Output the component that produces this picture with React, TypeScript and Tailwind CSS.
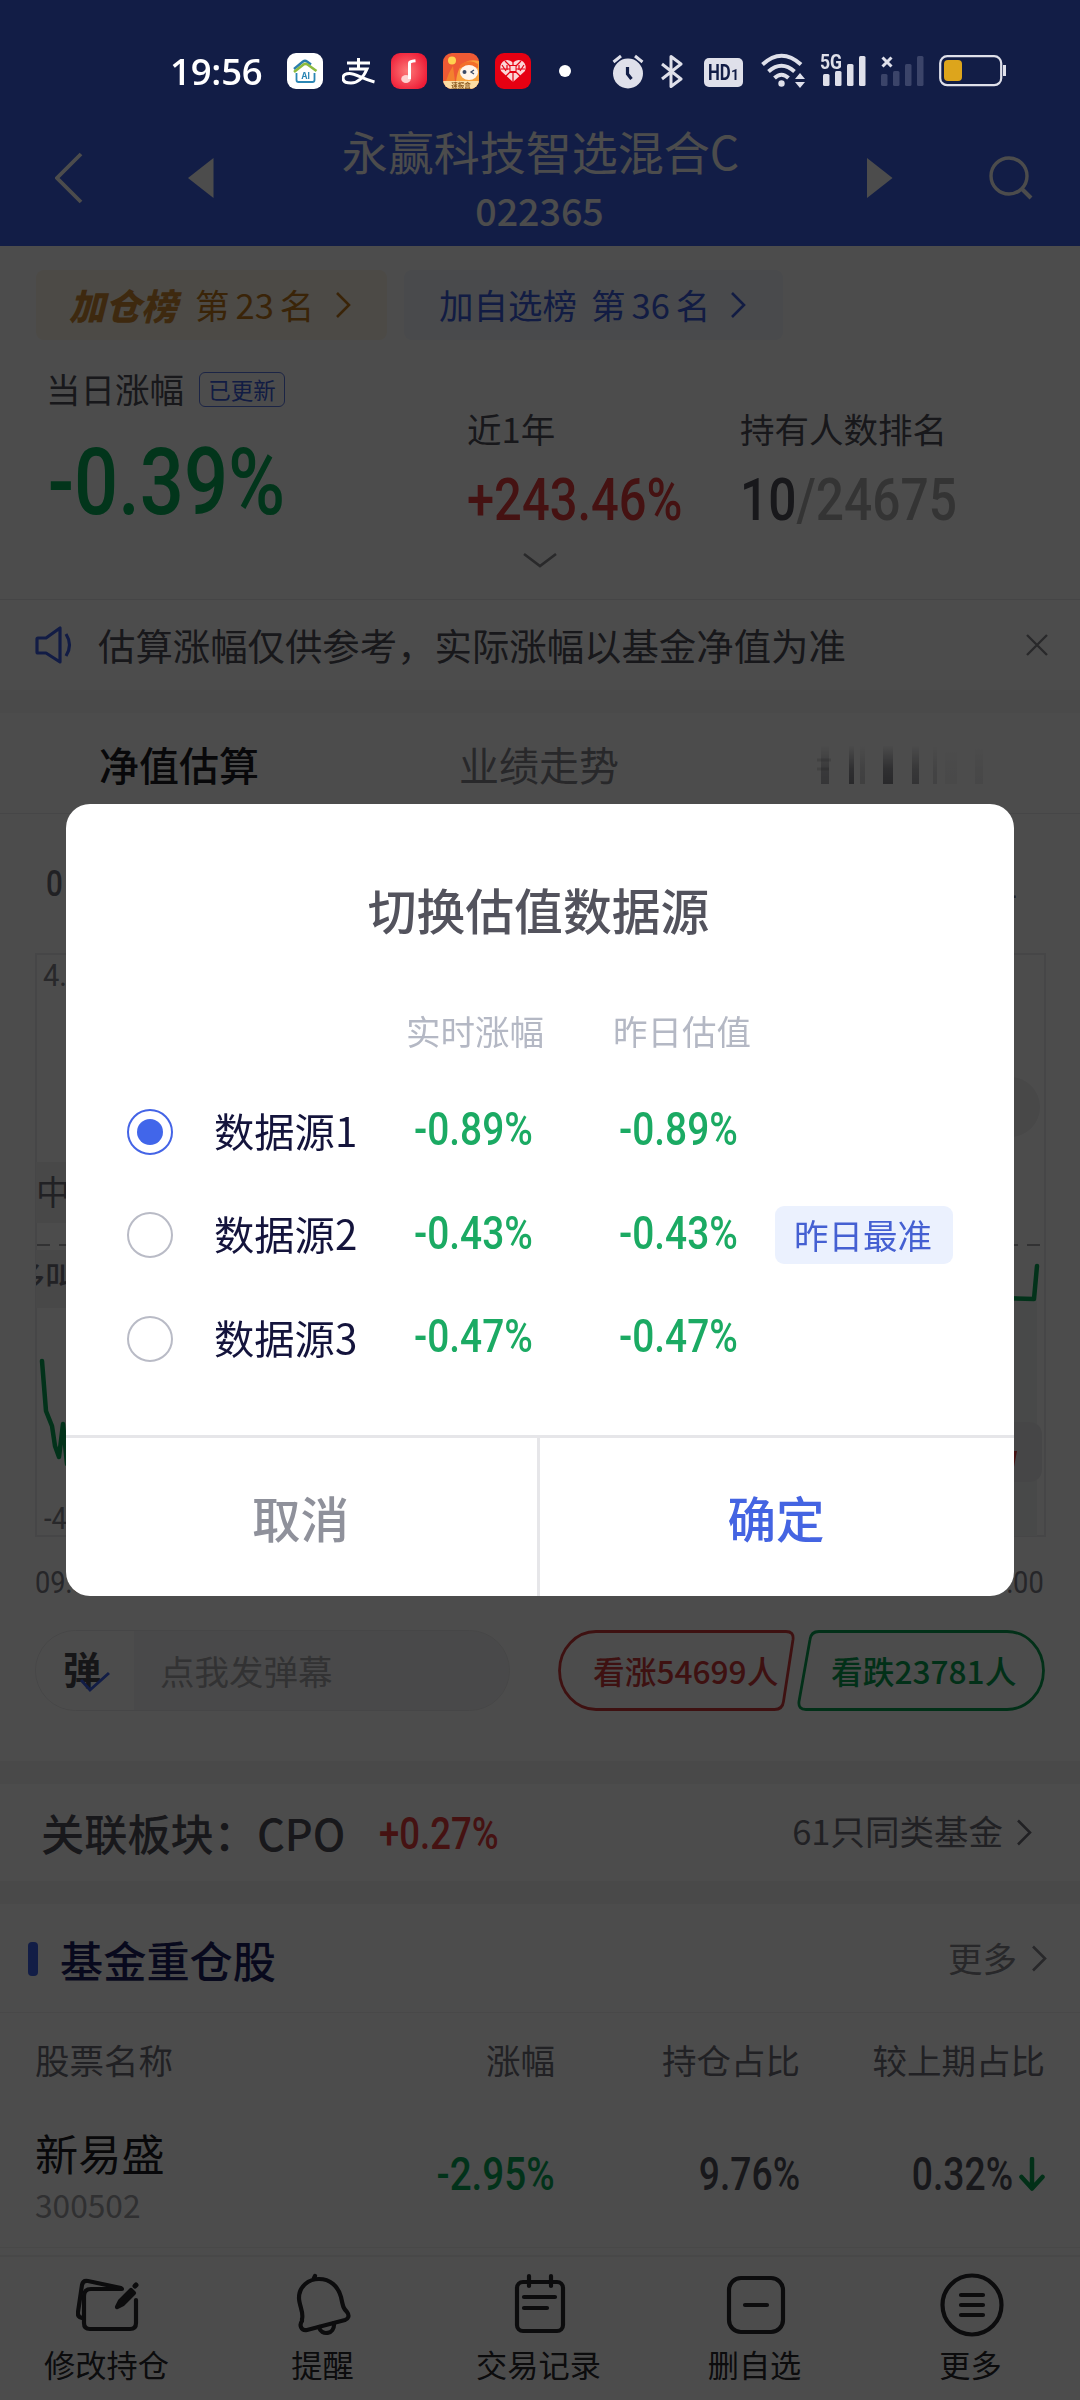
import type { ReactNode } from 'react'
import clsx from 'clsx'

const sources = [
  { name: '数据源1', today: '-0.89%', yesterday: '-0.89%', checked: true },
  { name: '数据源2', today: '-0.43%', yesterday: '-0.43%', best: true },
  { name: '数据源3', today: '-0.47%', yesterday: '-0.47%' },
]

// Narrow figures for every rate and price
function Num({ className, children }: { className?: string; children: ReactNode }) {
  return (
    <span
      className={clsx(
        "inline-block whitespace-nowrap font-['Roboto',sans-serif] font-medium leading-none",
        className
      )}
    >
      {children}
    </span>
  )
}

function Chevron({ className }: { className?: string }) {
  return (
    <svg viewBox="0 0 16 26" className={className} fill="none" stroke="currentColor" strokeWidth="2.6">
      <path d="M2 1l12 12L2 25" />
    </svg>
  )
}

function StatusBar() {
  return (
    <div className="relative z-20 flex h-[110px] items-start pl-[170px] pt-[53px] text-white">
      <span className="w-[117px] font-['Open_Sans',sans-serif] text-[36.5px] font-semibold leading-[36px] tracking-[-0.2px]">
        19:56
      </span>
      <svg width="36" height="36" viewBox="0 0 36 36">
        <rect width="36" height="36" rx="9" fill="#fff" />
        <path d="M7 16L16 8.5q2-1.5 4 0l4 3" fill="none" stroke="#2b7fae" strokeWidth="2.4" />
        <path d="M7 19l9.500-7.500q2-1.400 4 0l9 6.500" fill="none" stroke="#8dbb3e" strokeWidth="2.6" />
        <path d="M9.500 20v7q0 2 2 2h14q2 0 2-2v-7" fill="none" stroke="#2b86b4" strokeWidth="1.8" />
        <text x="18.500" y="25.500" textAnchor="middle" fontSize="8.500" fontWeight="700" fontFamily="Inter" fill="#2b86b4">AI</text>
      </svg>
      <svg width="34" height="36" viewBox="0 0 34 36" className="ml-[19px]" fill="none" stroke="#fff" strokeWidth="3">
        <path d="M5 10h23M16.500 5v11M7 16h18c-3 7-8 14-16 14-5 0-8-2-8-5s3-4.600 6.500-4.600c6 0 12 5.100 25 8.600" />
      </svg>
      <svg width="36" height="36" viewBox="0 0 36 36" className="ml-[15px]">
        <defs>
          <radialGradient id="music" cx="0.45" cy="0.5" r="0.6">
            <stop offset="0" stopColor="#fd7a78" />
            <stop offset="1" stopColor="#ee1b36" />
          </radialGradient>
        </defs>
        <rect width="36" height="36" rx="9" fill="url(#music)" />
        <ellipse cx="15" cy="26" rx="4.800" ry="4" fill="#ffd0cf" />
        <path d="M18.500 26V10q0-1.600 6-2.200" fill="none" stroke="#fff" strokeWidth="3" />
      </svg>
      <svg width="36" height="36" viewBox="0 0 36 36" className="ml-4">
        <defs>
          <clipPath id="boxClip"><rect width="36" height="36" rx="9" /></clipPath>
        </defs>
        <g clipPath="url(#boxClip)">
          <rect width="36" height="36" fill="#ee5a34" />
          <path d="M13 36C12 16 20 4 36 8v28z" fill="#f9a13c" />
          <path d="M0 36l6-16 4-7 3 23z" fill="#f3812e" />
          <circle cx="9" cy="7.500" r="4" fill="#ffd24f" />
          <path d="M17 12q9-7 18-1v4H17z" fill="#f36f2a" />
          <ellipse cx="26" cy="19.500" rx="9" ry="7.500" fill="#fff5ea" />
          <circle cx="21.500" cy="19" r="2" fill="#3b4a66" />
          <path d="M31 17l-3 2 3 2" fill="none" stroke="#3b4a66" strokeWidth="1.300" />
          <rect y="28" width="36" height="8" fill="#fbdca4" />
          <text x="18" y="34.600" textAnchor="middle" fontSize="6.500" fontWeight="700" fontFamily="Noto Sans CJK SC" fill="#8c5a20">速报盒</text>
        </g>
      </svg>
      <svg width="36" height="36" viewBox="0 0 36 36" className="ml-4">
        <rect width="36" height="36" rx="9" fill="#e60012" />
        <path d="M18 29L6 18q-2-6 2-9.500Q13 5 18 9.500 23 5 28 8.500q4 3.500 2 9.500z" fill="#fbd5d6" />
        <path d="M18 9v20M10 8l16 16M26 8L10 24M6 16h24M12 12v5M24 12v5M14 19.500h8M7 12l4 6M29 12l-4 6" stroke="#e60012" strokeWidth="1.200" />
        <path d="M15 12.500h6v6h-6z" fill="#fbd5d6" stroke="#e60012" strokeWidth="1" />
      </svg>
      <span className="ml-7 mt-3 size-3 rounded-full bg-white" />
      <svg width="32" height="35" viewBox="0 0 32 35" className="ml-[41px] mt-px">
        <circle cx="16" cy="19.500" r="15" fill="#dfe0ea" />
        <path d="M1.500 8L9 2M30.500 8L23 2" stroke="#dfe0ea" strokeWidth="3" />
        <path d="M15.500 13v7l4 5" fill="none" stroke="#121d46" strokeWidth="3.200" />
      </svg>
      <svg width="22" height="35" viewBox="0 0 22 35" className="ml-[17px] mt-px" fill="none" stroke="#dfe0ea" strokeWidth="3">
        <path d="M1 10l19 15-10 7.500V2.500L20 10 1 25" strokeLinejoin="round" />
      </svg>
      <span className="ml-[21px] mt-[5px] flex h-[29px] w-[39px] items-baseline justify-center overflow-hidden rounded-[5px] bg-[#dfe0ea] font-['Roboto',sans-serif] text-[21.500px] font-bold leading-[29px] text-[#121d46]">
        <span className="-mr-[7px] origin-left scale-x-[0.78]">HD</span>
        <span className="ml-[1px] text-[14px] leading-none">1</span>
      </span>
      <svg width="45" height="36" viewBox="0 0 45 36" className="ml-[18px]" fill="none" stroke="#dfe0ea" strokeWidth="4">
        <path d="M1.500 11.500Q20.500-6 40 11.500M7.500 18.500Q20.500 7 33.500 18.500M13.500 25Q20.500 18.500 27.500 25" />
        <circle cx="20.500" cy="30.500" r="3.200" fill="#dfe0ea" stroke="none" />
        <path d="M34 26l5-6 5 6zM34 29l5 6 5-6z" fill="#dfe0ea" stroke="none" />
      </svg>
      <svg width="47" height="42" viewBox="0 -8 47 42" className="-mt-2 ml-[14px]">
        <text x="0" y="15.500" fontSize="20" fontWeight="700" fontFamily="Roboto" fill="#dfe0ea" textLength="22" lengthAdjust="spacingAndGlyphs">5G</text>
        <g fill="#dfe0ea">
          <rect x="3" y="21" width="6.500" height="12" rx="1.500" />
          <rect x="15" y="18" width="6.500" height="15" rx="1.500" />
          <rect x="27" y="11" width="6.500" height="22" rx="1.500" />
          <rect x="39" y="3" width="6.500" height="30" rx="1.500" />
        </g>
      </svg>
      <svg width="44" height="34" viewBox="0 0 44 34" className="ml-[14px]">
        <path d="M1.500 4.500l9 9M10.500 4.500l-9 9" stroke="#dfe0ea" strokeWidth="3" />
        <g fill="#3b4469">
          <rect x="0" y="21" width="6.500" height="12" rx="1.500" />
          <rect x="12" y="18" width="6.500" height="15" rx="1.500" />
          <rect x="24" y="11" width="6.500" height="22" rx="1.500" />
          <rect x="36" y="3" width="6.500" height="30" rx="1.500" />
        </g>
      </svg>
      <svg width="68" height="33" viewBox="0 0 68 33" className="ml-[14px] mt-[2px]">
        <rect x="1.200" y="1.200" width="61" height="29" rx="7" fill="none" stroke="#dfe0ea" strokeWidth="2.200" />
        <rect x="5" y="5" width="18" height="21" rx="4" fill="#dda51c" />
        <path d="M65.500 10v11" stroke="#dfe0ea" strokeWidth="3" />
      </svg>
    </div>
  )
}

function Header() {
  return (
    <header className="h-[246px] bg-[#3d62e9]">
      <StatusBar />
      <div className="flex h-[136px] items-center pl-[55px] pr-[47px] text-white">
        <svg width="28" height="52" viewBox="0 0 28 52" fill="none" stroke="currentColor" strokeWidth="3.800">
          <path d="M26 2L2 26l24 24" />
        </svg>
        <svg width="26" height="40" viewBox="0 0 26 40" className="ml-[105px]" fill="currentColor">
          <path d="M25.500 0v40L0 20z" />
        </svg>
        <div className="flex flex-1 flex-col items-center pt-[4px]">
          <h1 className="text-[46px] font-normal leading-[60px]">永赢科技智选混合C</h1>
          <p className="pr-[2px] text-[37.600px] font-medium leading-[60px]">022365</p>
        </div>
        <svg width="26" height="40" viewBox="0 0 26 40" fill="currentColor">
          <path d="M0 0v40l25.500-20z" />
        </svg>
        <svg width="44" height="44" viewBox="0 0 44 44" className="ml-[96px]" fill="none" stroke="currentColor" strokeWidth="3.400">
          <circle cx="20" cy="20" r="18" />
          <path d="M32.500 32.500L42 42" strokeWidth="4" />
        </svg>
      </div>
    </header>
  )
}

function Summary() {
  return (
    <section className="h-[354px] border-b border-[#e8e8ea] pt-6 text-[#50505a]">
      <div className="flex h-[70px] gap-[17px] pl-9 text-[34.5px]">
        <div className="flex w-[351px] items-center rounded-[8px] bg-[#fdf8ea] pl-[33px] text-[#c27a1c]">
          <span className="w-[126px] pb-[2px] text-[36px] font-black italic text-[#d08a34]">加仓榜</span>
          <span>第</span>
          <span className="mx-[6px]">23</span>
          <span>名</span>
          <Chevron className="ml-[21px] h-[26px] w-4" />
        </div>
        <div className="flex w-[379px] items-center rounded-[8px] bg-[#f4f7fe] pl-[35px] text-[#3d5fe0]">
          <span className="mr-[14px]">加自选榜</span>
          <span>第</span>
          <span className="mx-[6px]">36</span>
          <span>名</span>
          <Chevron className="ml-[20px] h-[26px] w-4" />
        </div>
      </div>
      <div className="flex h-[213px] pl-[46px]">
        <div className="w-[421px] pt-[22px]">
          <div className="flex h-[54px] items-center">
            <span className="text-[34.5px]">当日涨幅</span>
            <span className="ml-[15px] flex h-[35px] w-[86px] items-center justify-center rounded-[6px] border border-[#5d78e6] text-[22.5px] leading-none text-[#3d5fe0]">
              已更新
            </span>
          </div>
          <Num className="mt-[20px] origin-left scale-x-[0.835] pl-[2px] text-[93px] text-[#07b35c]">-0.39%</Num>
        </div>
        <div className="w-[273px] pt-[62px]">
          <p className="h-[52px] text-[34.5px] leading-[52px]">近1年</p>
          <Num className="mt-[16px] origin-left scale-x-[0.828] text-[59px] text-[#e63c3c]">+243.46%</Num>
        </div>
        <div className="pt-[62px]">
          <p className="h-[52px] text-[34.5px] leading-[52px]">持有人数排名</p>
          <Num className="mt-[16px] origin-left scale-x-[0.842] text-[59px] text-[#50505a]">
            10<span className="text-[#b0b0b0]">/24675</span>
          </Num>
        </div>
      </div>
      <svg width="34" height="16" viewBox="0 0 34 16" className="mx-auto" fill="none" stroke="#8a8a8e" strokeWidth="2.600">
        <path d="M1 1l16 12L33 1" />
      </svg>
    </section>
  )
}

function Notice() {
  return (
    <div className="flex h-[90px] items-center pl-[35px] pr-8 text-[#50505a]">
      <svg width="40" height="38" viewBox="0 0 40 38" fill="none" stroke="#3d5fe8" strokeWidth="3.200" strokeLinejoin="round">
        <path d="M3 12h8L25 2v34L11 27H3q-1 0-1-1V13q0-1 1-1z" />
        <path d="M31 8q7 11 0 22" />
      </svg>
      <span className="ml-[23px] flex-1 whitespace-nowrap text-[37.4px]">估算涨幅仅供参考，实际涨幅以基金净值为准</span>
      <svg width="22" height="22" viewBox="0 0 22 22" stroke="#8a8a8e" strokeWidth="2.400">
        <path d="M1 1l20 20M21 1L1 21" />
      </svg>
    </div>
  )
}

const streaks = [
  { x: 4, w: 8, o: 0.45 },
  { x: 32, w: 5, o: 0.7 },
  { x: 43, w: 5, o: 0.25 },
  { x: 66, w: 10, o: 0.7 },
  { x: 95, w: 7, o: 0.5 },
  { x: 116, w: 4, o: 0.2 },
  { x: 128, w: 12, o: 0.06 },
  { x: 158, w: 8, o: 0.1 },
]

function Tabs() {
  return (
    <div className="flex h-[101px] items-center border-b border-[#ececee] pl-[99px] pt-[2px] text-[40px]">
      <span className="w-[360px] font-medium text-[#1c1c22]">净值估算</span>
      <span className="w-[358px] text-[#85858c]">业绩走势</span>
      <svg width="170" height="40" viewBox="0 0 170 40" className="mt-[2px]">
        <defs>
          <linearGradient id="fade" x1="0" y1="0" x2="0" y2="1">
            <stop offset="0" stopColor="#55555f" stopOpacity="0" />
            <stop offset="0.6" stopColor="#55555f" stopOpacity="0.8" />
            <stop offset="1" stopColor="#55555f" />
          </linearGradient>
        </defs>
        {streaks.map((s) => (
          <rect key={s.x} x={s.x} width={s.w} height="39" fill="url(#fade)" opacity={s.o} />
        ))}
        <path d="M0 15h14M0 24h12" stroke="#55555f" strokeWidth="3" opacity="0.2" />
      </svg>
    </div>
  )
}

function Chart() {
  return (
    <div className="h-[816px]">
      <div className="flex h-[139px] items-center justify-between pl-[46px] pr-[62px]">
        <Num className="origin-left scale-x-[0.82] text-[36px] text-[#70707a]">0</Num>
        <span className="text-[34.500px] text-[#70707a]">1</span>
      </div>
      <svg width="1080" height="585" viewBox="0 953 1080 585" className="block">
        <rect x="36" y="954" width="1009" height="582" fill="none" stroke="#ececee" strokeWidth="2" />
        <rect x="36" y="1162" width="300" height="61" fill="#f0f0f2" />
        <rect x="36" y="1250" width="300" height="58" fill="#f0f0f2" />
        <rect x="900" y="1077" width="140" height="60" rx="30" fill="#f0f0f2" />
        <rect x="1000" y="1299" width="37" height="237" fill="#f1f6f4" />
        <rect x="900" y="1422" width="142" height="60" rx="12" fill="#ececee" />
        <path d="M37 1245H1040" stroke="#a8a8ac" strokeWidth="2" strokeDasharray="13 9" />
        <path
          d="M42 1361l4 50 6 15 3 20 4 11 4-33 4 40 8-20M1000 1298l34 1 3-33"
          fill="none"
          stroke="#07a857"
          strokeWidth="4.500"
          strokeLinejoin="round"
          strokeLinecap="round"
        />
        <path d="M1012 1451h5l-3 16h-2z" fill="#e63c3c" />
        <text x="36" y="1205" fontSize="34" fill="#70707a">中</text>
        <svg x="36" y="1250" width="60" height="58" viewBox="0 0 60 58">
          <text x="-22" y="38" fontSize="31" fontWeight="500" fill="#70707a">多叫</text>
        </svg>
        <g fontFamily="Roboto" fontSize="31" fill="#85858c">
          <text x="43" y="986" textLength="24" lengthAdjust="spacingAndGlyphs">4.</text>
          <text x="44" y="1529" textLength="23" lengthAdjust="spacingAndGlyphs">-4</text>
        </g>
      </svg>
      <div className="flex h-[92px] justify-between pl-[35px] pr-9 pt-7 text-[#80808a]">
        <Num className="origin-left scale-x-[0.85] text-[32px] font-normal">09:30</Num>
        <Num className="origin-right scale-x-[0.85] text-[32px] font-normal">15:00</Num>
      </div>
    </div>
  )
}

function Danmaku() {
  return (
    <div className="flex h-[131px] items-start pl-[35px]">
      <div className="flex h-[81px] w-[475px] items-center overflow-hidden rounded-full border border-[#ececee] bg-[#f6f6f7]">
        <div className="relative flex h-full w-[98px] items-center bg-white pb-[5px] pl-[27px] text-[38px] font-bold leading-none text-[#4a4a50]">
          弹
          <svg width="32" height="22" viewBox="0 0 32 22" className="absolute left-[43px] top-10" fill="none" stroke="#3d62e9" strokeWidth="3">
            <path d="M2 9l9 10L30 2" />
          </svg>
        </div>
        <span className="ml-[26px] text-[34.5px] text-[#a8a8ac]">点我发弹幕</span>
      </div>
      <div className="relative ml-12 flex h-[81px] w-[238px] items-center pl-[35px] text-[31.7px] font-medium text-[#d03a3a]">
        <svg width="238" height="81" viewBox="0 0 238 81" className="absolute inset-0" fill="none" stroke="currentColor" strokeWidth="2.800">
          <path d="M38 1.500h190q8 0 7 8l-9.500 62q-1 8-9 8H38a36.500 39 0 0 1 0-78z" />
        </svg>
        看涨54699人
      </div>
      <div className="relative ml-[1px] flex h-[81px] w-[248px] items-center pl-[34px] text-[31.7px] font-medium text-[#07a050]">
        <svg width="248" height="81" viewBox="0 0 248 81" className="absolute inset-0" fill="none" stroke="currentColor" strokeWidth="2.800">
          <path d="M210 1.500H22q-8 0-9 8l-11 62q-1 8 7 8h201a36.500 39 0 0 0 0-78z" />
        </svg>
        看跌23781人
      </div>
    </div>
  )
}

function Holdings() {
  return (
    <section>
      <div className="flex h-[109px] items-center border-b border-[#f0f0f2] pl-7 pr-[33px]">
        <span className="mt-[2px] h-[34px] w-[10px] rounded-[4px] bg-[#3d62e9]" />
        <h2 className="ml-[22px] flex-1 pt-[2px] text-[43.2px] font-medium text-[#1d1f63]">基金重仓股</h2>
        <span className="text-[34.5px] text-[#85858c]">更多</span>
        <Chevron className="ml-[14px] h-[27px] w-4 text-[#85858c]" />
      </div>
      <div className="flex h-[92px] items-center pl-[35px] pr-[35px] pt-[1px] text-[34.5px] text-[#70707a]">
        <span className="w-[200px]">股票名称</span>
        <span className="w-[320px] text-right">涨幅</span>
        <span className="w-[245px] text-right">持仓占比</span>
        <span className="flex-1 text-right">较上期占比</span>
      </div>
      <div className="flex h-[143px] items-center border-b border-[#f0f0f2] px-[35px] pb-[5px]">
        <div className="w-[200px]">
          <p className="text-[43.2px] leading-[60px] text-[#1c1c22]">新易盛</p>
          <p className="text-[31.7px] leading-[44px] text-[#a0a0a6]">300502</p>
        </div>
        <div className="w-[320px] text-right">
          <Num className="origin-right scale-x-[0.84] text-[46px] text-[#07a857]">-2.95%</Num>
        </div>
        <div className="w-[245px] text-right">
          <Num className="origin-right scale-x-[0.81] text-[46px] text-[#50505a]">9.76%</Num>
        </div>
        <div className="flex flex-1 items-center justify-end">
          <Num className="origin-right scale-x-[0.81] text-[46px] text-[#50505a]">0.32%</Num>
          <svg width="26" height="34" viewBox="0 0 26 34" className="ml-[6px]" fill="none" stroke="#07a050" strokeWidth="4.500" strokeLinecap="round" strokeLinejoin="round">
            <path d="M13 2v29M2.500 20L13 31.500 23.500 20" />
          </svg>
        </div>
      </div>
    </section>
  )
}

const actions = [
  {
    label: '修改持仓',
    icon: (
      <>
        <path d="M46 16H15q-7 0-7 7v27q0 6 6 6h40q6 0 6-6V27" />
        <path d="M6 45q-5-1-4-6l4-27q1-5 6-4l33 7" />
        <path d="M41 34l3-6 11-11 3 3-11 11z" fill="currentColor" />
        <path d="M59 13l1-1" strokeWidth="5" />
      </>
    ),
  },
  {
    label: '提醒',
    icon: (
      <>
        <path d="M10 46C12 40 7 32 7 25 7 13 17 6 27 6c11 0 19 7 22 18 2 9 2 11 6 15 3 4 1 7-2 8L15 57c-6 1-8-5-5-9z" />
        <path d="M22 5l1-2M27 54c2 9 16 8 15-4" />
      </>
    ),
  },
  {
    label: '交易记录',
    icon: (
      <>
        <rect x="9" y="9" width="46" height="49" rx="6" />
        <path d="M21 3v10M43 3v10M16 24h31M16 35h23" />
      </>
    ),
  },
  {
    label: '删自选',
    icon: (
      <>
        <rect x="5" y="5" width="54" height="54" rx="12" />
        <path d="M21 32h22" />
      </>
    ),
  },
  {
    label: '更多',
    icon: (
      <>
        <circle cx="32" cy="32" r="29.500" />
        <path d="M21 22h22M21 32h22M21 42h22" />
      </>
    ),
  },
]

function BottomNav() {
  return (
    <nav className="mt-[7px] flex h-[146px] border-t-2 border-[#f0f0f2] pt-[16px] text-[#28282e]">
      {actions.map((action) => (
        <div key={action.label} className="flex flex-1 flex-col items-center">
          <svg width="64" height="64" viewBox="0 0 64 64" fill="none" stroke="currentColor" strokeWidth="4.200" strokeLinecap="round" strokeLinejoin="round">
            {action.icon}
          </svg>
          <span className="mt-[5px] pr-[3px] text-[31.200px] leading-[44px]">{action.label}</span>
        </div>
      ))}
    </nav>
  )
}

function SourceDialog() {
  return (
    <div className="fixed inset-0 z-10 flex items-center justify-center bg-black/70">
      <div role="dialog" className="flex h-[792px] w-[948px] flex-col overflow-hidden rounded-[24px] bg-white">
        <h2 className="pr-[3px] pt-[70px] text-center text-[48.8px] font-medium leading-[70px] text-[#53535d]">切换估值数据源</h2>
        <div className="mt-[62px] flex h-[50px] items-center pl-[340px] text-[34.5px] text-[#b4b8c4]">
          <span className="w-[207px]">实时涨幅</span>
          <span>昨日估值</span>
        </div>
        <div className="mt-[24px]">
          {sources.map((s) => (
            <div key={s.name} className="flex h-[103.6px] items-center pl-[61px]">
              <span
                className={clsx(
                  'flex size-[46px] items-center justify-center rounded-full border-[2.500px]',
                  s.checked ? 'border-[#4464e6]' : 'border-[#b9bbc6]'
                )}
              >
                {s.checked && <span className="size-[26px] rounded-full bg-[#4166ea]" />}
              </span>
              <span className="ml-[41px] w-[200px] pb-[4px] text-[40.300px] leading-[60px] text-[#14143c]">{s.name}</span>
              <Num className="mb-[5px] w-[205px] origin-left scale-x-[0.845] text-[46px] text-[#1baa63]">{s.today}</Num>
              <Num className="mb-[5px] w-[156px] origin-left scale-x-[0.845] text-[46px] text-[#1baa63]">{s.yesterday}</Num>
              {s.best && (
                <span className="flex h-[58px] w-[178px] items-center justify-center rounded-[9px] bg-[#ebf1fe] pb-[3px] pr-[2px] text-[34.5px] leading-none text-[#4560d2]">
                  昨日最准
                </span>
              )}
            </div>
          ))}
        </div>
        <div className="mt-auto flex h-[161px] border-t-[3px] border-[#e6e6e9] text-[48.500px] font-medium">
          <button className="w-[474px] border-r-[3px] border-[#e6e6e9] pr-[2px] text-[#8f919b]">取消</button>
          <button className="flex-1 pr-[2px] text-[#4464e2]">确定</button>
        </div>
      </div>
    </div>
  )
}

export default function App() {
  return (
    <div className="h-[2400px] w-[1080px] overflow-hidden bg-white font-['Noto_Sans_CJK_SC',sans-serif]">
      <Header />
      <Summary />
      <Notice />
      <div className="h-[23px] bg-[#f8f8f8]" />
      <Tabs />
      <Chart />
      <Danmaku />
      <div className="h-[23px] bg-[#f6f6f6]" />
      <div className="flex h-[97px] items-center pl-[41px] pr-12">
        <span className="text-[43.2px] font-medium text-[#50505a]">关联板块：CPO</span>
        <Num className="ml-[34px] mt-1 flex-1 origin-left scale-x-[0.84] text-[43.500px] text-[#e63c3c]">+0.27%</Num>
        <span className="pb-1 text-[34.5px] text-[#70707a]">61只同类基金</span>
        <Chevron className="ml-[13px] h-[27px] w-4 text-[#70707a]" />
      </div>
      <div className="h-[23px] bg-[#f6f6f6]" />
      <Holdings />
      <BottomNav />
      <SourceDialog />
    </div>
  )
}
